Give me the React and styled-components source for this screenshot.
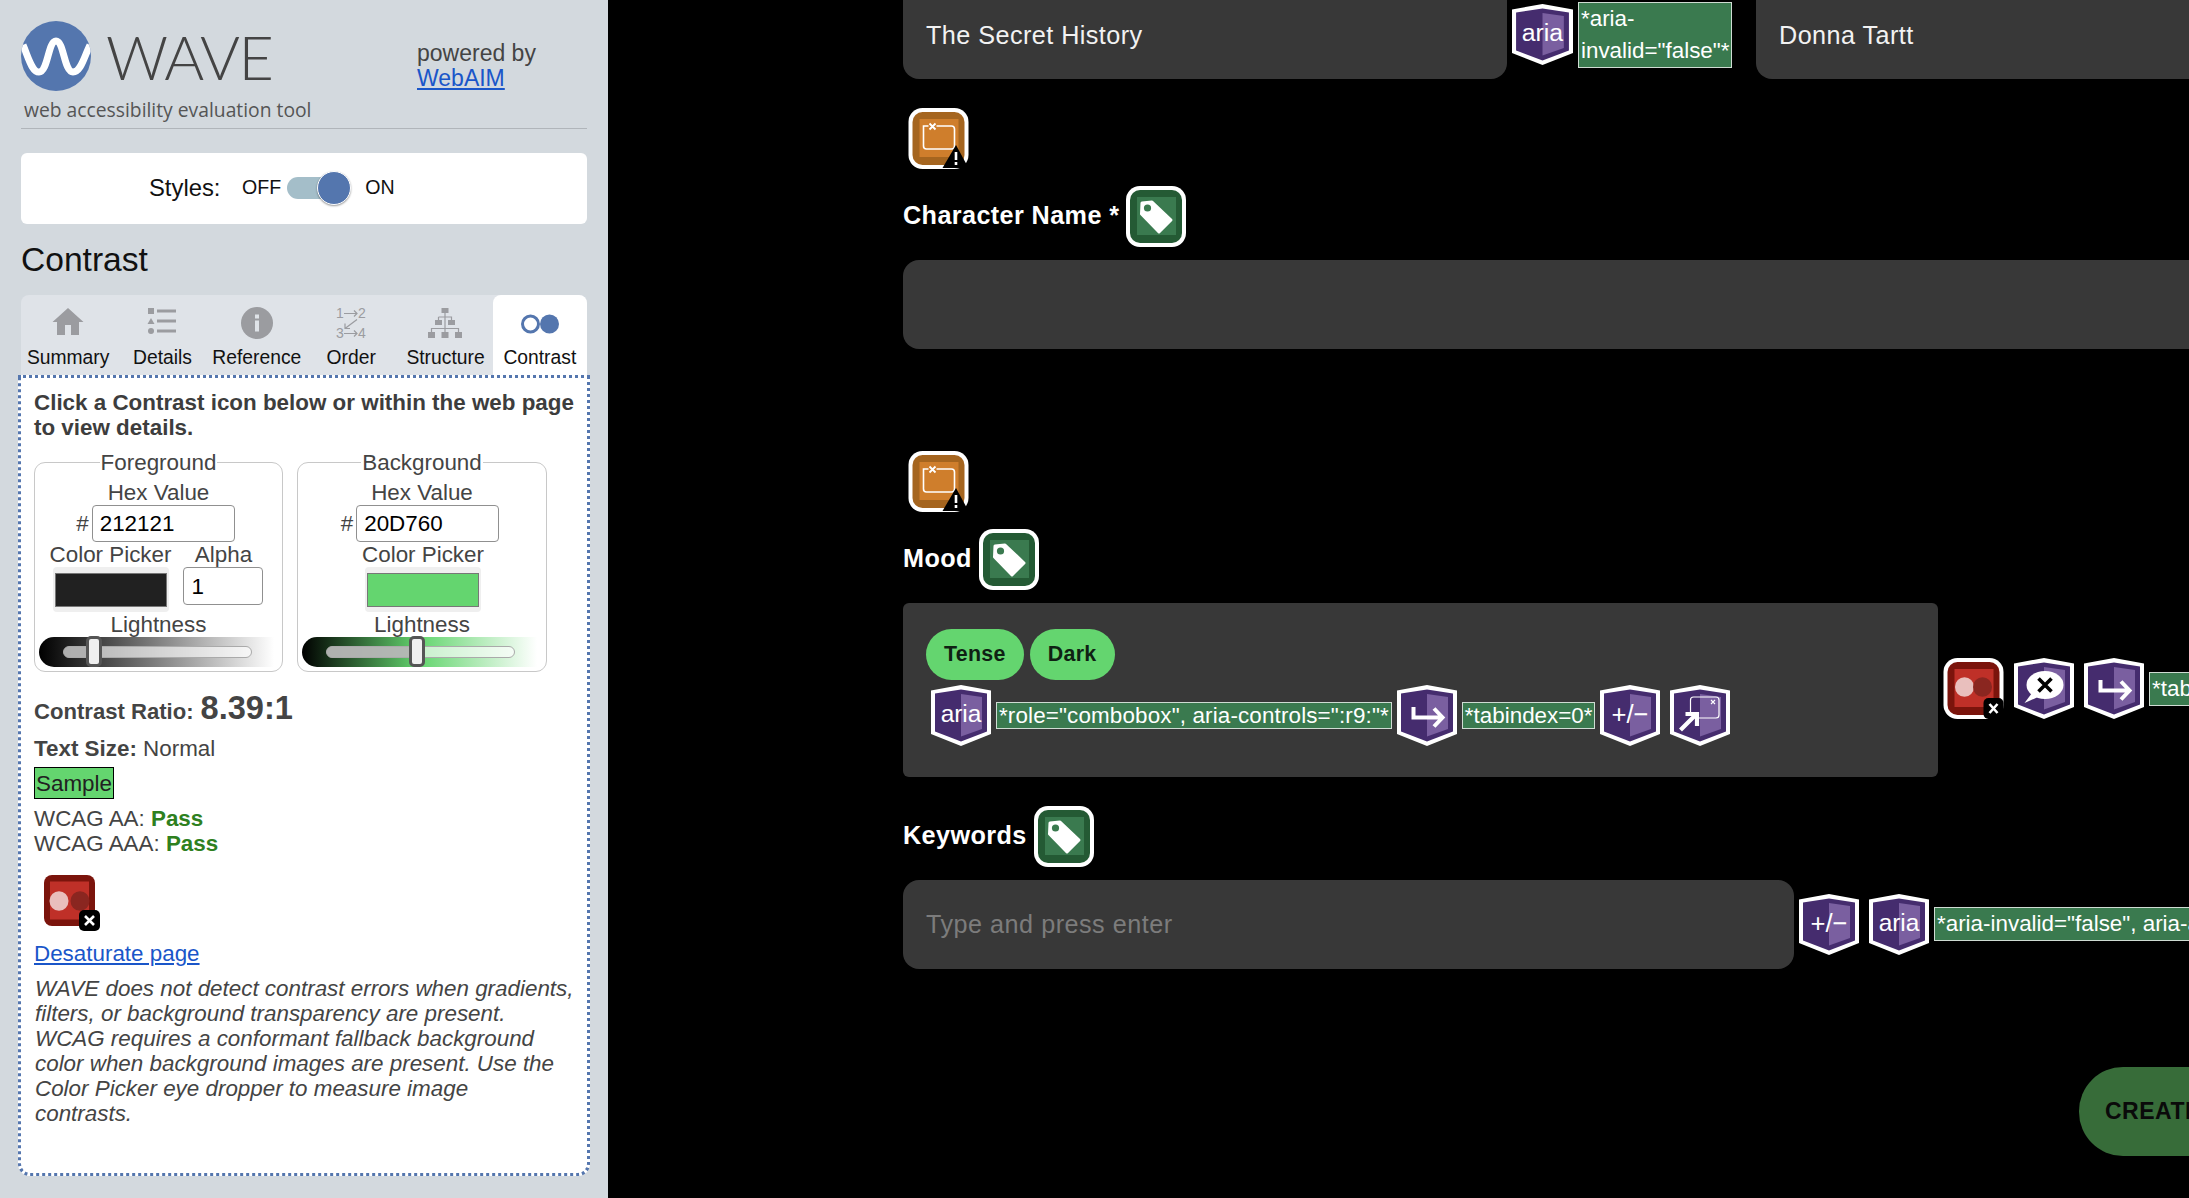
import React from "react"
import styled, { createGlobalStyle } from "styled-components"

const GlobalStyle = createGlobalStyle`
  html, body {
    margin: 0;
    padding: 0;
    background: #000;
    overflow: hidden;
  }
  * {
    box-sizing: border-box;
  }
`

const Page = styled.div`
  display: flex;
  width: 2189px;
  height: 1198px;
  overflow: hidden;
  font-family: "Liberation Sans", Arial, sans-serif;
`

/* ---------- sidebar ---------- */

const Sidebar = styled.aside`
  flex: 0 0 608px;
  height: 1198px;
  padding: 0 21px;
  background: #d3d9de;
  color: #444;
`
const Header = styled.header`
  height: 129px;
  padding-top: 21px;
  border-bottom: 1px solid #b0b5ba;
`
const BrandRow = styled.div`
  display: flex;
  align-items: center;
  height: 70px;
`
const Logo = styled.svg`
  flex: none;
  width: 70px;
  height: 70px;
`
const Wordmark = styled.span`
  margin: 2px 0 0 15px;
  width: 311px;
  font-family: "Lato", "Liberation Sans", sans-serif;
  font-weight: 300;
  font-size: 61px;
  letter-spacing: -1.4px;
  line-height: 70px;
  color: #444;
`
const Powered = styled.div`
  margin-top: 20px;
  font-size: 23px;
  line-height: 25px;
  color: #444;
`
const Link = styled.a`
  color: #1a56c9;
  text-decoration: underline;
`
const Tagline = styled.div`
  margin: 5px 0 0 3px;
  font-family: "Open Sans", sans-serif;
  font-size: 19.3px;
  line-height: 28px;
  color: #555;
`
const StylesBox = styled.div`
  display: flex;
  align-items: center;
  height: 71px;
  margin-top: 24px;
  padding: 0 0 2px 128px;
  background: #fff;
  border-radius: 6px;
  color: #111;
`
const StylesLabel = styled.span`
  width: 93px;
  font-size: 23.8px;
`
const SwitchText = styled.span`
  font-size: 19.6px;
`
const SwitchTrack = styled.div`
  position: relative;
  width: 54px;
  height: 22px;
  margin: 0 24px 0 6px;
  background: #a4bec9;
  border-radius: 11px;
`
const SwitchKnob = styled.div`
  position: absolute;
  top: -6px;
  right: -10px;
  width: 34px;
  height: 34px;
  background: #5476ae;
  border: 1px solid #fff;
  border-radius: 50%;
  box-shadow: 0 1px 2px rgba(0, 0, 0, 0.4);
`
const Heading = styled.h1`
  margin: 0;
  font-weight: 400;
  font-size: 33.6px;
  line-height: 71px;
  color: #111;
`
const Tabs = styled.nav`
  display: grid;
  grid-template-columns: repeat(6, 1fr);
  height: 80px;
  background: #dfe3e8;
  border-radius: 8px 8px 0 0;
`
const Tab = styled.div`
  display: flex;
  flex-direction: column;
  align-items: center;
  padding-top: 9px;
  background: ${props => (props.$active ? "#fff" : "transparent")};
  border-radius: 8px 8px 0 0;
  font-size: 19.3px;
  color: #111;
`
const TabIcon = styled.svg`
  display: block;
  height: 39px;
  width: 40px;
`
const TabLabel = styled.span`
  margin-top: 3px;
  line-height: 24px;
`
const Panel = styled.section`
  height: 801px;
  margin: 0 -3px;
  padding: 12px 13px;
  background: #fff;
  border: 3px dotted #5476ae;
  border-radius: 0 0 12px 12px;
  font-size: 22.4px;
  line-height: 25px;
  color: #444;
`
const Intro = styled.p`
  margin: 0;
  font-weight: 700;
  font-size: 22.4px;
  color: #3d3d3d;
`
const Pickers = styled.div`
  display: grid;
  grid-template-columns: 249px 250px;
  gap: 14px;
  margin-top: 10px;
`
const Fieldset = styled.fieldset`
  display: flex;
  flex-direction: column;
  min-width: 0;
  margin: 0;
  height: 222px;
  padding: 5px 0 0;
  border: 1px solid #c8c8c8;
  border-radius: 11px;
  text-align: center;
`
const Legend = styled.legend`
  margin: 0 auto;
  padding: 0 1px;
  line-height: 25px;
`
const Hex = styled.div`
  display: flex;
  align-items: center;
  justify-content: center;
  gap: 3px;
  padding-right: ${props => props.$pad}px;
`
const TextBox = styled.div`
  display: flex;
  align-items: center;
  width: ${props => props.$width}px;
  height: ${props => props.$height}px;
  padding-left: 7px;
  background: #fff;
  border: 1px solid #909090;
  border-radius: 4px;
  font-size: 22.4px;
  color: #000;
`
const PickerRow = styled.div`
  display: flex;
  justify-content: center;
  gap: 12px;
  height: 70px;
  padding: ${props => (props.$single ? "0 0 0 2px" : "0 4px 0 0")};
`
const PickerCol = styled.div`
  display: flex;
  flex-direction: column;
  align-items: center;
`
const Swatch = styled.div`
  display: flex;
  align-items: center;
  justify-content: center;
  width: 116px;
  height: 45px;
  background: #efefef;
  border-radius: 4px;
  &::after {
    content: "";
    width: 110px;
    height: 32px;
    background: ${props => props.$color};
    border: 1px solid #777;
  }
`
const Slider = styled.div`
  position: relative;
  width: 235px;
  height: 30px;
  margin-left: 4px;
  background: ${props => props.$gradient};
  border-radius: 15px 0 0 15px;
`
const SliderTrack = styled.div`
  position: absolute;
  top: 9px;
  left: 24px;
  width: 189px;
  height: 12px;
  overflow: hidden;
  background: rgba(255, 255, 255, 0.65);
  border: 1px solid #aaa;
  border-radius: 6px;
`
const SliderFill = styled.div`
  height: 100%;
  background: rgba(175, 175, 175, 0.85);
`
const SliderThumb = styled.div`
  position: absolute;
  top: -1px;
  width: 16px;
  height: 31px;
  background: #efefef;
  border: 3px solid #555;
  border-radius: 5px;
`
const RatioLine = styled.div`
  display: flex;
  align-items: baseline;
  gap: 7px;
  margin-top: 16px;
  font-weight: 700;
  font-size: 22.1px;
  line-height: 40px;
`
const RatioValue = styled.span`
  font-size: 32.6px;
`
const SizeLine = styled.div`
  margin-top: 4px;
`
const SampleBox = styled.span`
  display: inline-block;
  margin-top: 6px;
  padding: 0 1px;
  height: 32px;
  line-height: 31px;
  background: #64d56f;
  border: 1px solid #000;
  color: #212121;
`
const ResultList = styled.div`
  margin-top: 7px;
`
const Pass = styled.strong`
  color: #2e8020;
`
const PanelIcon = styled.svg`
  display: block;
  width: 56px;
  height: 56px;
  margin: 19px 0 10px 10px;
`
const Note = styled.p`
  margin: 10px 0 0 1px;
  font-style: italic;
  color: #444;
`

/* ---------- page under test ---------- */

const Main = styled.main`
  flex: 1;
  min-width: 0;
  height: 1198px;
  padding-left: 295px;
  background: #000;
  overflow: hidden;
  color: #fff;
`
const Row = styled.div`
  display: flex;
  align-items: flex-start;
  white-space: nowrap;
`
const TopInput = styled.div`
  flex: 0 0 ${props => (props.$second ? "700px" : "604px")};
  display: flex;
  align-items: center;
  height: 79px;
  margin-left: ${props => (props.$second ? "24px" : "0")};
  padding: 0 23px 8px;
  background: #383838;
  border-radius: 0 0 16px 16px;
  font-size: 25.2px;
  letter-spacing: 0.45px;
  color: #f2f2f2;
`
const Flag = styled.svg`
  display: block;
  flex: none;
  width: ${props => (props.$wide ? "61px" : "60px")};
  height: 61px;
  margin: ${props => props.$offset || 0}px 5px 0;
`
const CodeTag = styled.span`
  flex: none;
  display: block;
  margin-top: ${props => props.$offset || 0}px;
  padding: 0 2px;
  background: #3a7a4f;
  border: 1px solid #cfdcd3;
  font-size: 22.4px;
  letter-spacing: ${props => props.$spacing || 0}px;
  line-height: ${props => props.$line || 25}px;
  color: #fff;
  white-space: ${props => (props.$wrap ? "normal" : "nowrap")};
  width: ${props => (props.$width ? `${props.$width}px` : "auto")};
`
const AlertFlag = styled(Flag)`
  margin-top: ${props => props.$top}px;
`
const LabelFlag = styled(Flag)`
  margin-left: 7px;
`
const FieldLabel = styled.div`
  display: flex;
  align-items: center;
  margin-top: ${props => props.$top}px;
  font-weight: 700;
  font-size: 25.2px;
  letter-spacing: 0.4px;
`
const FieldText = styled.span`
  margin-bottom: 3px;
`
const BigInput = styled.div`
  flex: none;
  display: flex;
  align-items: center;
  width: ${props => props.$width || 1400}px;
  height: 89px;
  margin-top: 13px;
  padding: 0 23px;
  background: #383838;
  border-radius: 16px;
  font-size: 25.2px;
  letter-spacing: 0.5px;
  color: #7c7c7c;
`
const MoodBox = styled.div`
  flex: none;
  width: 1035px;
  height: 174px;
  margin-top: 13px;
  padding: 26px 23px 0;
  background: #383838;
  border-radius: 6px;
`
const Chips = styled.div`
  display: flex;
  gap: 6px;
`
const Chip = styled.span`
  height: 51px;
  padding: 0 18px;
  background: #64d56f;
  border-radius: 26px;
  font-weight: 700;
  font-size: 21.4px;
  letter-spacing: 0.3px;
  line-height: 51px;
  color: #0f2113;
`
const FlagRow = styled.div`
  display: flex;
  align-items: center;
  margin-top: 5px;
  white-space: nowrap;
`
const CreateButton = styled.div`
  width: 240px;
  height: 89px;
  margin: 98px 0 0 1176px;
  padding-left: 26px;
  background: #376c39;
  border-radius: 44px;
  font-weight: 700;
  font-size: 23px;
  letter-spacing: 0.5px;
  line-height: 89px;
  color: #0a0a0a;
  white-space: nowrap;
`

/* ---------- drawings ---------- */

const Shield = ({ children, offset, wide }) => (
  <Flag viewBox="0 0 60 61" preserveAspectRatio="none" $offset={offset} $wide={wide}>
    <polygon points="30,0 60,5.5 60,49 30,61 0,49 0,5.5" fill="#fff" />
    <polygon points="30,4.5 56,8.5 56,46.5 30,56.5 4,46.5 4,8.5" fill="#452c6e" />
    <polygon points="30,9 51,12 51,44 30,51.5" fill="#7a5fa0" />
    {children}
  </Flag>
)

const flagText = {
  fill: "#fff",
  fontFamily: "Liberation Sans, Arial, sans-serif",
  textAnchor: "middle",
}

const AriaFlag = ({ offset, wide }) => (
  <Shield offset={offset} wide={wide}>
    <text x="30" y="37" fontSize="24.4" style={flagText}>aria</text>
  </Shield>
)

const PlusMinusFlag = ({ offset }) => (
  <Shield offset={offset}>
    <text x="30" y="38" fontSize="25.6" style={flagText}>+/−</text>
  </Shield>
)

const TabFlag = ({ offset }) => (
  <Shield offset={offset}>
    <path d="M16.5 22V32.5H45M37 23.5L45.5 32.5L37 41.5" fill="none" stroke="#fff" strokeWidth="4" />
  </Shield>
)

const DragFlag = () => (
  <Shield>
    <path d="M20.5 28V15Q20.5 12 23.5 12H46Q49 12 49 15V30Q49 33 46 33H27" fill="none" stroke="#fff" strokeWidth="1.2" />
    <path d="M41 15L45 19M45 15L41 19" stroke="#fff" strokeWidth="1.1" />
    <path d="M10.5 45L25 30.5M15.5 29H27V41" fill="none" stroke="#fff" strokeWidth="4.2" />
  </Shield>
)

const ChatFlag = ({ offset }) => (
  <Shield offset={offset}>
    <ellipse cx="31" cy="27" rx="18.5" ry="14" fill="#fff" />
    <polygon points="10.5,45 18,35 23,39.5" fill="#fff" />
    <path d="M24.5 20.5L37.5 33.5M37.5 20.5L24.5 33.5" stroke="#000" strokeWidth="3.6" />
  </Shield>
)

const Frame = ({ dark, light }) => (
  <>
    <rect width="60" height="61" rx="14" fill="#fff" />
    <rect x="4" y="4" width="52" height="53" rx="10" fill={dark} />
    <rect x="11" y="11" width="39" height="38" fill={light} />
  </>
)

const TagFlag = () => (
  <LabelFlag viewBox="0 0 60 61">
    <Frame dark="#245a34" light="#3a7a4f" />
    <path d="M16 17L26 16L45 34L33 46L15.5 28Z" fill="#fff" stroke="#fff" strokeWidth="3" strokeLinejoin="round" />
    <circle cx="21.5" cy="22" r="3.6" fill="#3a7a4f" />
  </LabelFlag>
)

const WarnFlag = ({ top }) => (
  <AlertFlag viewBox="0 0 60 61" $top={top} $wide>
    <Frame dark="#a5651f" light="#cf7e2c" />
    <path d="M20 18H15V38Q15 41 18 41H43Q46 41 46 38V21Q46 18 43 18H28" fill="none" stroke="#fff" strokeWidth="1.6" />
    <path d="M21 15.5L27 21.5M27 15.5L21 21.5" stroke="#fff" strokeWidth="1.8" />
    <polygon points="47.5,37 60,60 34,60" fill="#000" />
    <rect x="46.2" y="44" width="2.6" height="8" fill="#fff" />
    <rect x="46.2" y="54" width="2.6" height="3" fill="#fff" />
  </AlertFlag>
)

const RedFlag = ({ offset }) => (
  <Flag viewBox="0 0 60 61" $offset={offset} $wide>
    <rect width="60" height="61" rx="14" fill="#fff" />
    <rect x="4" y="4" width="52" height="53" rx="10" fill="#7b140c" />
    <rect x="11" y="11" width="39" height="38" fill="#bf3028" />
    <ellipse cx="21" cy="29" rx="9.5" ry="9.8" fill="#e9bfbd" />
    <ellipse cx="39" cy="29" rx="9.5" ry="9.8" fill="#8a2620" />
    <rect x="40" y="40" width="20" height="21" rx="5" fill="#000" />
    <path d="M46 46L54 55M54 46L46 55" stroke="#fff" strokeWidth="2.6" />
  </Flag>
)

const grey = "#9b9ca0"

const tabIcons = {
  summary: (
    <polygon fill={grey} points="20,1 35.5,15 31,15 31,28 23,28 23,18 17,18 17,28 9,28 9,15 4.5,15" />
  ),
  details: (
    <g fill={grey}>
      <rect x="6" y="1" width="6" height="6" />
      <polygon points="9,11 12.5,17 5.5,17" />
      <circle cx="9" cy="24" r="3" />
      <rect x="15" y="2.5" width="19" height="3" />
      <rect x="15" y="12.5" width="19" height="3" />
      <rect x="15" y="22.5" width="19" height="3" />
    </g>
  ),
  reference: (
    <g>
      <ellipse cx="20" cy="16" rx="16" ry="16" fill={grey} />
      <rect x="18" y="13.5" width="4" height="11" fill="#dfe3e8" />
      <rect x="18" y="7.5" width="4" height="4" fill="#dfe3e8" />
    </g>
  ),
  order: (
    <g>
      <g fill={grey} fontFamily="Liberation Sans, Arial, sans-serif" fontSize="14">
        <text x="5" y="11">1</text>
        <text x="27" y="11">2</text>
        <text x="5" y="31">3</text>
        <text x="27" y="31">4</text>
      </g>
      <path d="M13 6.5H26M23 3.5L26 6.5L23 9.5M13 26.5H26M23 23.5L26 26.5L23 29.5M26 12.5L14 21.5M14 16.5V21.5H19" fill="none" stroke={grey} strokeWidth="1.2" />
    </g>
  ),
  structure: (
    <g fill={grey}>
      <rect x="16.5" y="1" width="7" height="5" />
      <rect x="10" y="13" width="7" height="5" />
      <rect x="23" y="13" width="7" height="5" />
      <rect x="3" y="25" width="7" height="6" />
      <rect x="16.5" y="25" width="7" height="6" />
      <rect x="30" y="25" width="7" height="6" />
      <path d="M20 6V25M13.5 10H26.5V13M13.5 10V13M6.5 25V21.5H33.5V25" fill="none" stroke={grey} strokeWidth="1.2" />
    </g>
  ),
  contrast: (
    <g>
      <circle cx="10.5" cy="17" r="8" fill="none" stroke="#5476ae" strokeWidth="3" />
      <circle cx="29.5" cy="17" r="9.5" fill="#5476ae" />
    </g>
  ),
}

const tabs = [
  { id: "summary", label: "Summary" },
  { id: "details", label: "Details" },
  { id: "reference", label: "Reference" },
  { id: "order", label: "Order" },
  { id: "structure", label: "Structure" },
  { id: "contrast", label: "Contrast" },
]

const ColorSlider = ({ gradient, thumb, fill }) => (
  <Slider $gradient={gradient}>
    <SliderTrack>
      <SliderFill style={{ width: fill }} />
    </SliderTrack>
    <SliderThumb style={{ left: thumb }} />
  </Slider>
)

const App = () => {
  return (
    <Page>
      <GlobalStyle />
      <Sidebar>
        <Header>
          <BrandRow>
            <Logo viewBox="0 0 70 70">
              <defs>
                <clipPath id="logo-clip">
                  <circle cx="35" cy="35" r="35" />
                </clipPath>
              </defs>
              <circle cx="35" cy="35" r="35" fill="#5476ae" />
              <path
                d="M2 24C8 38 11 51 18 51C27 51 27 20 35 20C43 20 43 51 52 51C60 51 63 36 69 24"
                fill="none"
                stroke="#fff"
                strokeWidth="7"
                clipPath="url(#logo-clip)"
              />
            </Logo>
            <Wordmark>WAVE</Wordmark>
            <Powered>
              powered by
              <br />
              <Link>WebAIM</Link>
            </Powered>
          </BrandRow>
          <Tagline>web accessibility evaluation tool</Tagline>
        </Header>
        <StylesBox>
          <StylesLabel>Styles:</StylesLabel>
          <SwitchText>OFF</SwitchText>
          <SwitchTrack>
            <SwitchKnob />
          </SwitchTrack>
          <SwitchText>ON</SwitchText>
        </StylesBox>
        <Heading>Contrast</Heading>
        <Tabs>
          {tabs.map(tab => (
            <Tab key={tab.id} $active={tab.id === "contrast"}>
              <TabIcon viewBox="0 -3 40 39">{tabIcons[tab.id]}</TabIcon>
              <TabLabel>{tab.label}</TabLabel>
            </Tab>
          ))}
        </Tabs>
        <Panel>
          <Intro>Click a Contrast icon below or within the web page to view details.</Intro>
          <Pickers>
            <Fieldset>
              <Legend>Foreground</Legend>
              <div>Hex Value</div>
              <Hex $pad={6}>
                #<TextBox $width={143} $height={37}>212121</TextBox>
              </Hex>
              <PickerRow>
                <PickerCol>
                  <span>Color Picker</span>
                  <Swatch $color="#212121" />
                </PickerCol>
                <PickerCol>
                  <span>Alpha</span>
                  <TextBox $width={80} $height={38}>1</TextBox>
                </PickerCol>
              </PickerRow>
              <div>Lightness</div>
              <ColorSlider
                gradient="linear-gradient(90deg, #000, #212121 13%, #fff)"
                thumb="47px"
                fill="26px"
              />
            </Fieldset>
            <Fieldset>
              <Legend>Background</Legend>
              <div>Hex Value</div>
              <Hex $pad={4}>
                #<TextBox $width={143} $height={37}>20D760</TextBox>
              </Hex>
              <PickerRow $single>
                <PickerCol>
                  <span>Color Picker</span>
                  <Swatch $color="#64d56f" />
                </PickerCol>
              </PickerRow>
              <div>Lightness</div>
              <ColorSlider
                gradient="linear-gradient(90deg, #000, #64d56f 50%, #fff)"
                thumb="107px"
                fill="86px"
              />
            </Fieldset>
          </Pickers>
          <RatioLine>
            Contrast Ratio: <RatioValue>8.39:1</RatioValue>
          </RatioLine>
          <SizeLine>
            <b>Text Size:</b> Normal
          </SizeLine>
          <SampleBox>Sample</SampleBox>
          <ResultList>
            <div>
              WCAG AA: <Pass>Pass</Pass>
            </div>
            <div>
              WCAG AAA: <Pass>Pass</Pass>
            </div>
          </ResultList>
          <PanelIcon viewBox="0 0 56 56">
            <rect width="51" height="51" rx="8" fill="#7b140c" />
            <rect x="6" y="6.5" width="39" height="38" fill="#bf3028" />
            <ellipse cx="15" cy="26" rx="9.5" ry="9.8" fill="#e9bfbd" />
            <ellipse cx="36" cy="26" rx="9.5" ry="9.8" fill="#8a2620" />
            <rect x="35" y="35" width="21" height="21" rx="5" fill="#000" />
            <path d="M41 41L50 50M50 41L41 50" stroke="#fff" strokeWidth="2.6" />
          </PanelIcon>
          <Link>Desaturate page</Link>
          <Note>
            WAVE does not detect contrast errors when gradients, filters, or background transparency are
            present. WCAG requires a conformant fallback background color when background images are
            present. Use the Color Picker eye dropper to measure image
            <br />
            contrasts.
          </Note>
        </Panel>
      </Sidebar>

      <Main>
        <Row>
          <TopInput>The Secret History</TopInput>
          <AriaFlag offset={4} wide />
          <CodeTag $offset={2} $line={32} $wrap $width={154}>
            *aria-invalid="false"*
          </CodeTag>
          <TopInput $second>Donna Tartt</TopInput>
        </Row>

        <WarnFlag top={29} />
        <FieldLabel $top={17}>
          <FieldText>Character Name *</FieldText>
          <TagFlag />
        </FieldLabel>
        <BigInput />

        <WarnFlag top={102} />
        <FieldLabel $top={17}>
          <FieldText>Mood</FieldText>
          <TagFlag />
        </FieldLabel>
        <Row>
          <MoodBox>
            <Chips>
              <Chip>Tense</Chip>
              <Chip>Dark</Chip>
            </Chips>
            <FlagRow>
              <AriaFlag />
              <CodeTag $spacing={0.15}>*role="combobox", aria-controls=":r9:"*</CodeTag>
              <TabFlag />
              <CodeTag>*tabindex=0*</CodeTag>
              <PlusMinusFlag />
              <DragFlag />
            </FlagRow>
          </MoodBox>
          <RedFlag offset={68} />
          <ChatFlag offset={68} />
          <TabFlag offset={68} />
          <CodeTag $offset={82} $line={32}>*tabindex=0*</CodeTag>
        </Row>

        <FieldLabel $top={29}>
          <FieldText>Keywords</FieldText>
          <TagFlag />
        </FieldLabel>
        <Row>
          <BigInput $width={891}>Type and press enter</BigInput>
          <PlusMinusFlag offset={27} />
          <AriaFlag offset={27} />
          <CodeTag $offset={40} $line={32}>*aria-invalid="false", aria-autocomplete="list"*</CodeTag>
        </Row>
        <CreateButton>CREATE</CreateButton>
      </Main>
    </Page>
  )
}

export default App
